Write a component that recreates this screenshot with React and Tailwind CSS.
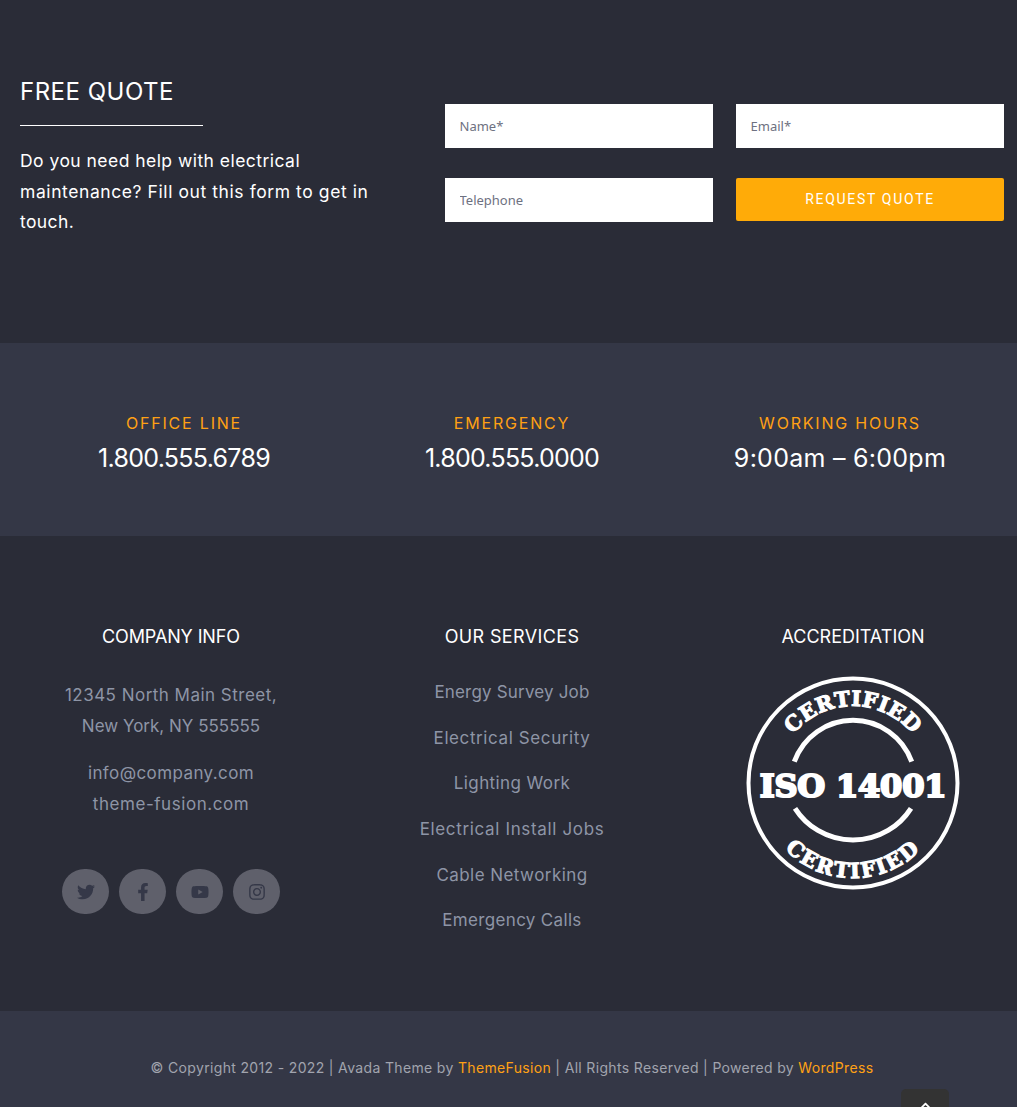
import React from "react";
import { FaTwitter, FaFacebookF, FaYoutube, FaInstagram, FaChevronUp } from "react-icons/fa";

const font = { fontFamily: "Inter, 'Liberation Sans', sans-serif" };

function Field({ label }) {
  return (
    <input
      placeholder={label}
      className="h-[44px] w-full bg-white px-[14.5px] text-[13px] text-[#5f6272] placeholder:text-[#6e7181] font-['Noto_Sans',sans-serif] outline-none"
    />
  );
}

function Info({ title, value, valueClass }) {
  return (
    <div className="flex flex-col items-center">
      <div className="text-[16px] leading-[24px] tracking-[1.8px] text-[#ffa114] font-normal">{title}</div>
      <div className={"mt-[7px] text-[25px] leading-[32px] text-white " + valueClass}>{value}</div>
    </div>
  );
}

function Badge() {
  return (
    <svg width="214" height="214" viewBox="0 0 214 214" className="block">
      <defs>
        <path id="certTop" d="M 30 107 A 77 77 0 0 1 184 107" />
        <path id="certBottom" d="M 12 107 A 95 95 0 0 0 202 107" />
      </defs>
      <circle cx="107" cy="107" r="104.5" fill="none" stroke="#fff" strokeWidth="4" />
      <path d="M 48.3 85.7 A 62.3 62.3 0 0 1 165.7 85.7" fill="none" stroke="#fff" strokeWidth="5" />
      <path d="M 49 132.3 A 68.9 68.9 0 0 0 165 132.3" fill="none" stroke="#fff" strokeWidth="5" />
      <text x="107" y="121" textAnchor="middle" fill="#fff" stroke="#fff" strokeWidth="2.2" fontSize="32" fontWeight="700" fontFamily="'DejaVu Serif', serif" letterSpacing="-0.2">ISO 14001</text>
      <text fill="#fff" stroke="#fff" strokeWidth="1.1" fontSize="21" fontWeight="700" fontFamily="'DejaVu Serif', serif" textAnchor="middle" letterSpacing="0.3">
        <textPath href="#certTop" startOffset="50%">CERTIFIED</textPath>
      </text>
      <text fill="#fff" stroke="#fff" strokeWidth="1.1" fontSize="21" fontWeight="700" fontFamily="'DejaVu Serif', serif" textAnchor="middle" letterSpacing="2">
        <textPath href="#certBottom" startOffset="50%">CERTIFIED</textPath>
      </text>
    </svg>
  );
}

function Social({ children }) {
  return (
    <div className="flex h-[45px] w-[47px] items-center justify-center rounded-full bg-[#5f606b] text-[18px] text-[#353848]">
      {children}
    </div>
  );
}

export default function App() {
  return (
    <div className="relative h-[1107px] overflow-hidden bg-[#2a2c37]" style={font}>
      <section className="grid h-[343px] grid-cols-[425px_1fr] bg-[#2a2c37] pl-5 pr-[13px]">
        <div className="pt-[77px]">
          <h2 className="text-[24px] leading-[30px] text-white tracking-[0.5px]">FREE QUOTE</h2>
          <div className="mt-[18px] h-px w-[183px] bg-white" />
          <p className="mt-[20px] w-[360px] text-[17.5px] leading-[30.6px] text-white">
            <span className="block tracking-[0.46px]">Do you need help with electrical</span>
            <span className="block tracking-[0.58px]">maintenance? Fill out this form to get in</span>
            <span className="block tracking-[0.4px]">touch.</span>
          </p>
        </div>
        <div className="grid grid-cols-2 content-start gap-x-[23px] gap-y-[30px] pt-[104px]">
          <Field label="Name*" />
          <Field label="Email*" />
          <Field label="Telephone" />
          <button className="h-[43px] rounded-[2px] bg-[#ffab08] text-[14px] tracking-[1.7px] text-white font-['Roboto',sans-serif]">
            REQUEST QUOTE
          </button>
        </div>
      </section>

      <section className="grid h-[193px] grid-cols-3 content-start bg-[#343746] pl-5 pr-[13px] pt-[68px]">
        <Info title="OFFICE LINE" value="1.800.555.6789" valueClass="tracking-[-0.7px]" />
        <Info title="EMERGENCY" value="1.800.555.0000" valueClass="tracking-[-0.75px]" />
        <Info title="WORKING HOURS" value="9:00am – 6:00pm" valueClass="tracking-[0.27px]" />
      </section>

      <section className="grid h-[475px] grid-cols-3 gap-x-[39px] bg-[#2a2c37] pl-5 pr-[13px] pt-[89px] text-center">
        <div className="flex flex-col items-center">
          <h3 className="text-[18px] leading-[24px] text-white tracking-[-0.13px]">COMPANY INFO</h3>
          <div className="mt-[31px] text-[17px] leading-[31px] text-[#8e95a6]">
            <p className="tracking-[0.48px]">12345 North Main Street,</p>
            <p>New York, NY 555555</p>
            <p className="mt-[16px] tracking-[0.4px]">info@company.com</p>
            <p className="tracking-[0.55px]">theme-fusion.com</p>
          </div>
          <div className="mt-[49px] flex gap-[10px]">
            <Social><FaTwitter /></Social>
            <Social><FaFacebookF /></Social>
            <Social><FaYoutube /></Social>
            <Social><FaInstagram /></Social>
          </div>
        </div>
        <div className="flex flex-col items-center">
          <h3 className="text-[18px] leading-[24px] text-white tracking-[0.37px]">OUR SERVICES</h3>
          <ul className="mt-[28px] flex flex-col gap-[14.7px] text-[17px] leading-[31px] text-[#8e95a6]">
            <li className="tracking-[0.18px]">Energy Survey Job</li>
            <li className="tracking-[0.6px]">Electrical Security</li>
            <li className="tracking-[0.4px]">Lighting Work</li>
            <li className="tracking-[0.65px]">Electrical Install Jobs</li>
            <li className="tracking-[0.44px]">Cable Networking</li>
            <li className="tracking-[0.33px]">Emergency Calls</li>
          </ul>
        </div>
        <div className="flex flex-col items-center">
          <h3 className="text-[18px] leading-[24px] text-white tracking-[0px]">ACCREDITATION</h3>
          <div className="mt-[27px]"><Badge /></div>
        </div>
      </section>

      <section className="h-[96px] bg-[#343746] pl-5 pr-[13px] pt-[46px] text-center text-[14px] leading-[21px] tracking-[0.34px] text-[#a1a4ae]">
        © Copyright 2012 - 2022 | Avada Theme by <span className="text-[#ffa114]">ThemeFusion</span> | All Rights Reserved | Powered by <span className="text-[#ffa114]">WordPress</span>
      </section>

      <div className="absolute left-[901px] top-[1089px] flex h-[30px] w-[48px] justify-center rounded-t-[5px] bg-[#333333] pt-[11px] text-[11px] text-white">
        <FaChevronUp />
      </div>
    </div>
  );
}
